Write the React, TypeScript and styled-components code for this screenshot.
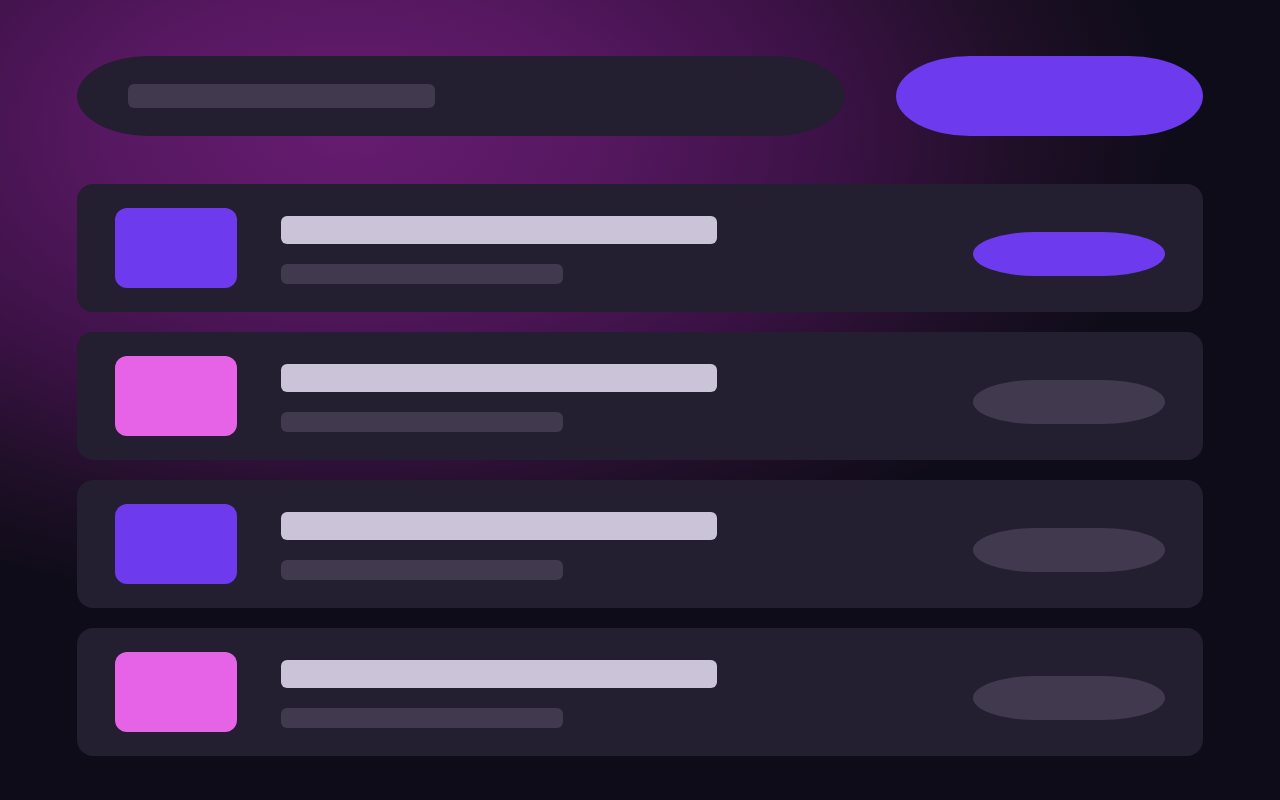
import styled, { createGlobalStyle } from 'styled-components';

const GlobalStyle = createGlobalStyle`
  html, body {
    margin: 0;
    padding: 0;
    background: #0f0c19;
    font-family: Inter, "Noto Sans", sans-serif;
  }
`;

type Item = { id: number; accent: 'violet' | 'pink'; active: boolean };

const items: Item[] = [
  { id: 1, accent: 'violet', active: true },
  { id: 2, accent: 'pink', active: false },
  { id: 3, accent: 'violet', active: false },
  { id: 4, accent: 'pink', active: false },
];

const App = () => {
  return (
    <>
      <GlobalStyle />
      <Page>
        <Header>
          <SearchBar>
            <SearchPlaceholder />
          </SearchBar>
          <PrimaryButton aria-label="action" />
        </Header>
        <List>
          {items.map((item) => (
            <Row key={item.id}>
              <Thumb $accent={item.accent} />
              <Lines>
                <TitleLine />
                <SubLine />
              </Lines>
              <Tag $active={item.active} />
            </Row>
          ))}
        </List>
      </Page>
    </>
  );
};

const Page = styled.main`
  box-sizing: border-box;
  width: 1280px;
  min-height: 800px;
  padding: 56px 77px;
  display: flex;
  flex-direction: column;
  gap: 48px;
  background: radial-gradient(
      ellipse 820px 480px at 350px 130px,
      #661c70 0%,
      #561860 30%,
      #3c1246 58%,
      #1f0f27 82%,
      rgba(15, 12, 25, 0) 100%
    ),
    #0f0c19;
`;

const Header = styled.header`
  display: flex;
  align-items: center;
  gap: 51px;
`;

const SearchBar = styled.div`
  box-sizing: border-box;
  width: 768px;
  height: 80px;
  padding: 28px 51px;
  background: #231e30;
  border-radius: 72px / 40px;
`;

const SearchPlaceholder = styled.div`
  width: 307px;
  height: 24px;
  border-radius: 6px;
  background: #413a4f;
`;

const PrimaryButton = styled.button`
  width: 307px;
  height: 80px;
  border: none;
  padding: 0;
  background: #6d3aee;
  border-radius: 74px / 40px;
  cursor: pointer;
`;

const List = styled.section`
  display: flex;
  flex-direction: column;
  gap: 20px;
`;

const Row = styled.article`
  box-sizing: border-box;
  height: 128px;
  padding: 24px 38px;
  display: flex;
  align-items: flex-start;
  background: #231e30;
  border-radius: 16px;
`;

const Thumb = styled.div<{ $accent: 'violet' | 'pink' }>`
  width: 122px;
  height: 80px;
  flex-shrink: 0;
  border-radius: 12px;
  background: ${({ $accent }) => ($accent === 'violet' ? '#6d3aee' : '#e663e8')};
`;

const Lines = styled.div`
  margin-left: 44px;
  padding-top: 8px;
  display: flex;
  flex-direction: column;
  gap: 20px;
  flex: 1;
`;

const TitleLine = styled.div`
  width: 436px;
  height: 28px;
  border-radius: 6px;
  background: #cbc3d8;
`;

const SubLine = styled.div`
  width: 282px;
  height: 20px;
  border-radius: 6px;
  background: #413a4f;
`;

const Tag = styled.div<{ $active: boolean }>`
  margin-top: 24px;
  width: 192px;
  height: 44px;
  flex-shrink: 0;
  border-radius: 62px / 22px;
  background: ${({ $active }) => ($active ? '#6d3aee' : '#413a4f')};
`;

export default App;
